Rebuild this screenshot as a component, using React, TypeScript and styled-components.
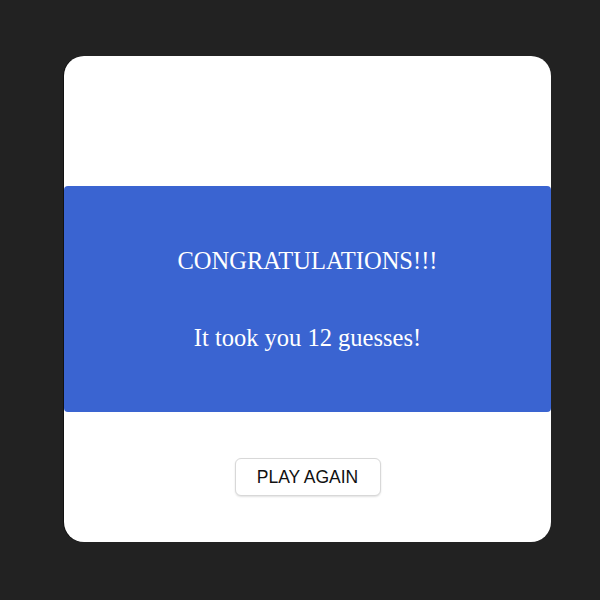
import React from "react";
import styled, { createGlobalStyle } from "styled-components";

const Global = createGlobalStyle`
  html, body { margin: 0; padding: 0; background: #222222; }
  body { width: 600px; height: 600px; overflow: hidden; font-family: "Liberation Serif", "Times New Roman", serif; }
`;

const Page = styled.div`
  padding: 56px 0 0 64px;
`;

const Card = styled.div`
  box-sizing: border-box;
  width: 487px;
  height: 486px;
  background: #ffffff;
  border-radius: 20px;
  box-shadow: -1px 0 0 #111;
  display: flex;
  flex-direction: column;
  align-items: center;
  padding-top: 130px;
`;

const Band = styled.div`
  width: 100%;
  height: 226px;
  background: #3a64d1;
  border-radius: 4px;
  color: #ffffff;
  display: flex;
  flex-direction: column;
  align-items: center;
`;

const Line = styled.div<{ $top: number }>`
  font-size: 24.5px;
  line-height: 28px;
  margin-top: ${(p) => p.$top}px;
`;

const Button = styled.button`
  margin-top: 46px;
  width: 146px;
  height: 38px;
  background: #ffffff;
  border: 1px solid #d8d8d8;
  border-radius: 6px;
  box-shadow: 0 1px 2px rgba(0,0,0,0.12);
  font-family: "Liberation Sans", Arial, sans-serif;
  font-size: 17.5px;
  color: #111;
  padding: 0;
`;

export default function App() {
  return (
    <>
      <Global />
      <Page>
        <Card>
          <Band>
            <Line $top={61}>CONGRATULATIONS!!!</Line>
            <Line $top={49}>It took you 12 guesses!</Line>
          </Band>
          <Button>PLAY AGAIN</Button>
        </Card>
      </Page>
    </>
  );
}
